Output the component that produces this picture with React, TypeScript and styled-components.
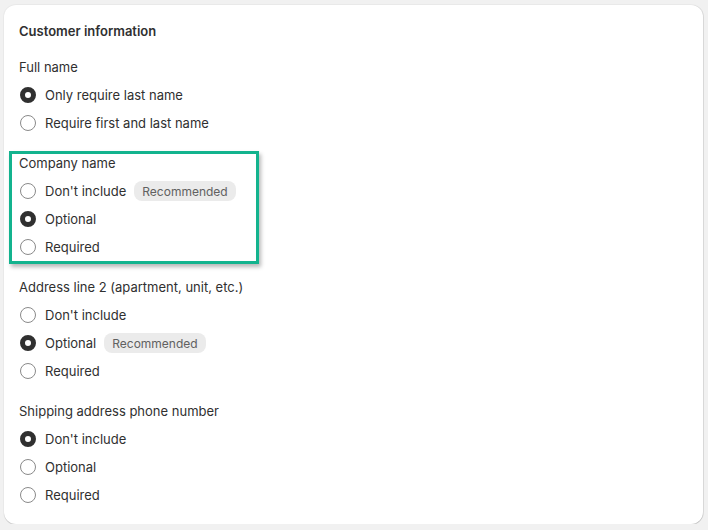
import React from 'react'
import styled, { createGlobalStyle } from 'styled-components'

const GlobalStyle = createGlobalStyle`
  html, body {
    margin: 0;
    background: #f1f1f1;
  }
  body {
    padding: 5px 5px 0 4px;
    font-family: Inter, "Noto Sans", sans-serif;
    color: #303030;
  }
`

const Card = styled.section`
  background: #ffffff;
  border-radius: 12px;
  box-shadow: 0 1px 0 rgba(0, 0, 0, 0.13), 1px 0 0 rgba(0, 0, 0, 0.07), 0 0 0 1px rgba(0, 0, 0, 0.03);
  padding: 16px 16px 19px 15px;
  display: flex;
  flex-direction: column;
  gap: 16px;
`

const Title = styled.h2`
  margin: 0;
  font-size: 13px;
  line-height: 20px;
  font-weight: 600;
`

const Groups = styled.div`
  display: flex;
  flex-direction: column;
  gap: 20px;
`

const Group = styled.fieldset<{ $highlight?: boolean }>`
  position: relative;
  margin: 0;
  padding: 0;
  border: 0;
  display: flex;
  flex-direction: column;
  gap: 8px;

  ${(p) =>
    p.$highlight &&
    `
    &::after {
      content: '';
      position: absolute;
      left: -10px;
      top: -2px;
      width: 250px;
      height: 113px;
      box-sizing: border-box;
      border: 3px solid #13b38e;
      box-shadow: 2px 3px 4px rgba(0, 0, 0, 0.28);
      pointer-events: none;
    }
  `}
`

const Legend = styled.div`
  font-size: 13px;
  line-height: 20px;
`

const Option = styled.label`
  display: flex;
  align-items: center;
  gap: 9px;
  height: 20px;
  font-size: 13px;
  padding-left: 1px;
`

const Radio = styled.span<{ $checked?: boolean }>`
  width: 16px;
  height: 16px;
  box-sizing: border-box;
  border-radius: 50%;
  flex: none;
  background: #ffffff;
  border: ${(p) => (p.$checked ? '5.5px solid #303030' : '1px solid #8a8a8a')};
`

const Badge = styled.span`
  margin-left: -1px;
  height: 20px;
  display: inline-flex;
  align-items: center;
  padding: 0 8px;
  border-radius: 8px;
  background: #ebebeb;
  color: #616161;
  font-size: 12px;
`

type Choice = { label: string; checked?: boolean; badge?: boolean }
type GroupData = { title: string; highlight?: boolean; options: Choice[] }

const groups: GroupData[] = [
  {
    title: 'Full name',
    options: [{ label: 'Only require last name', checked: true }, { label: 'Require first and last name' }],
  },
  {
    title: 'Company name',
    highlight: true,
    options: [{ label: "Don't include", badge: true }, { label: 'Optional', checked: true }, { label: 'Required' }],
  },
  {
    title: 'Address line 2 (apartment, unit, etc.)',
    options: [{ label: "Don't include" }, { label: 'Optional', checked: true, badge: true }, { label: 'Required' }],
  },
  {
    title: 'Shipping address phone number',
    options: [{ label: "Don't include", checked: true }, { label: 'Optional' }, { label: 'Required' }],
  },
]

const App: React.FC = () => {
  return (
    <>
      <GlobalStyle />
      <Card>
        <Title>Customer information</Title>
        <Groups>
          {groups.map((g) => (
            <Group key={g.title} $highlight={g.highlight}>
              <Legend>{g.title}</Legend>
              {g.options.map((o) => (
                <Option key={o.label}>
                  <Radio $checked={o.checked} />
                  {o.label}
                  {o.badge && <Badge>Recommended</Badge>}
                </Option>
              ))}
            </Group>
          ))}
        </Groups>
      </Card>
    </>
  )
}

export default App
